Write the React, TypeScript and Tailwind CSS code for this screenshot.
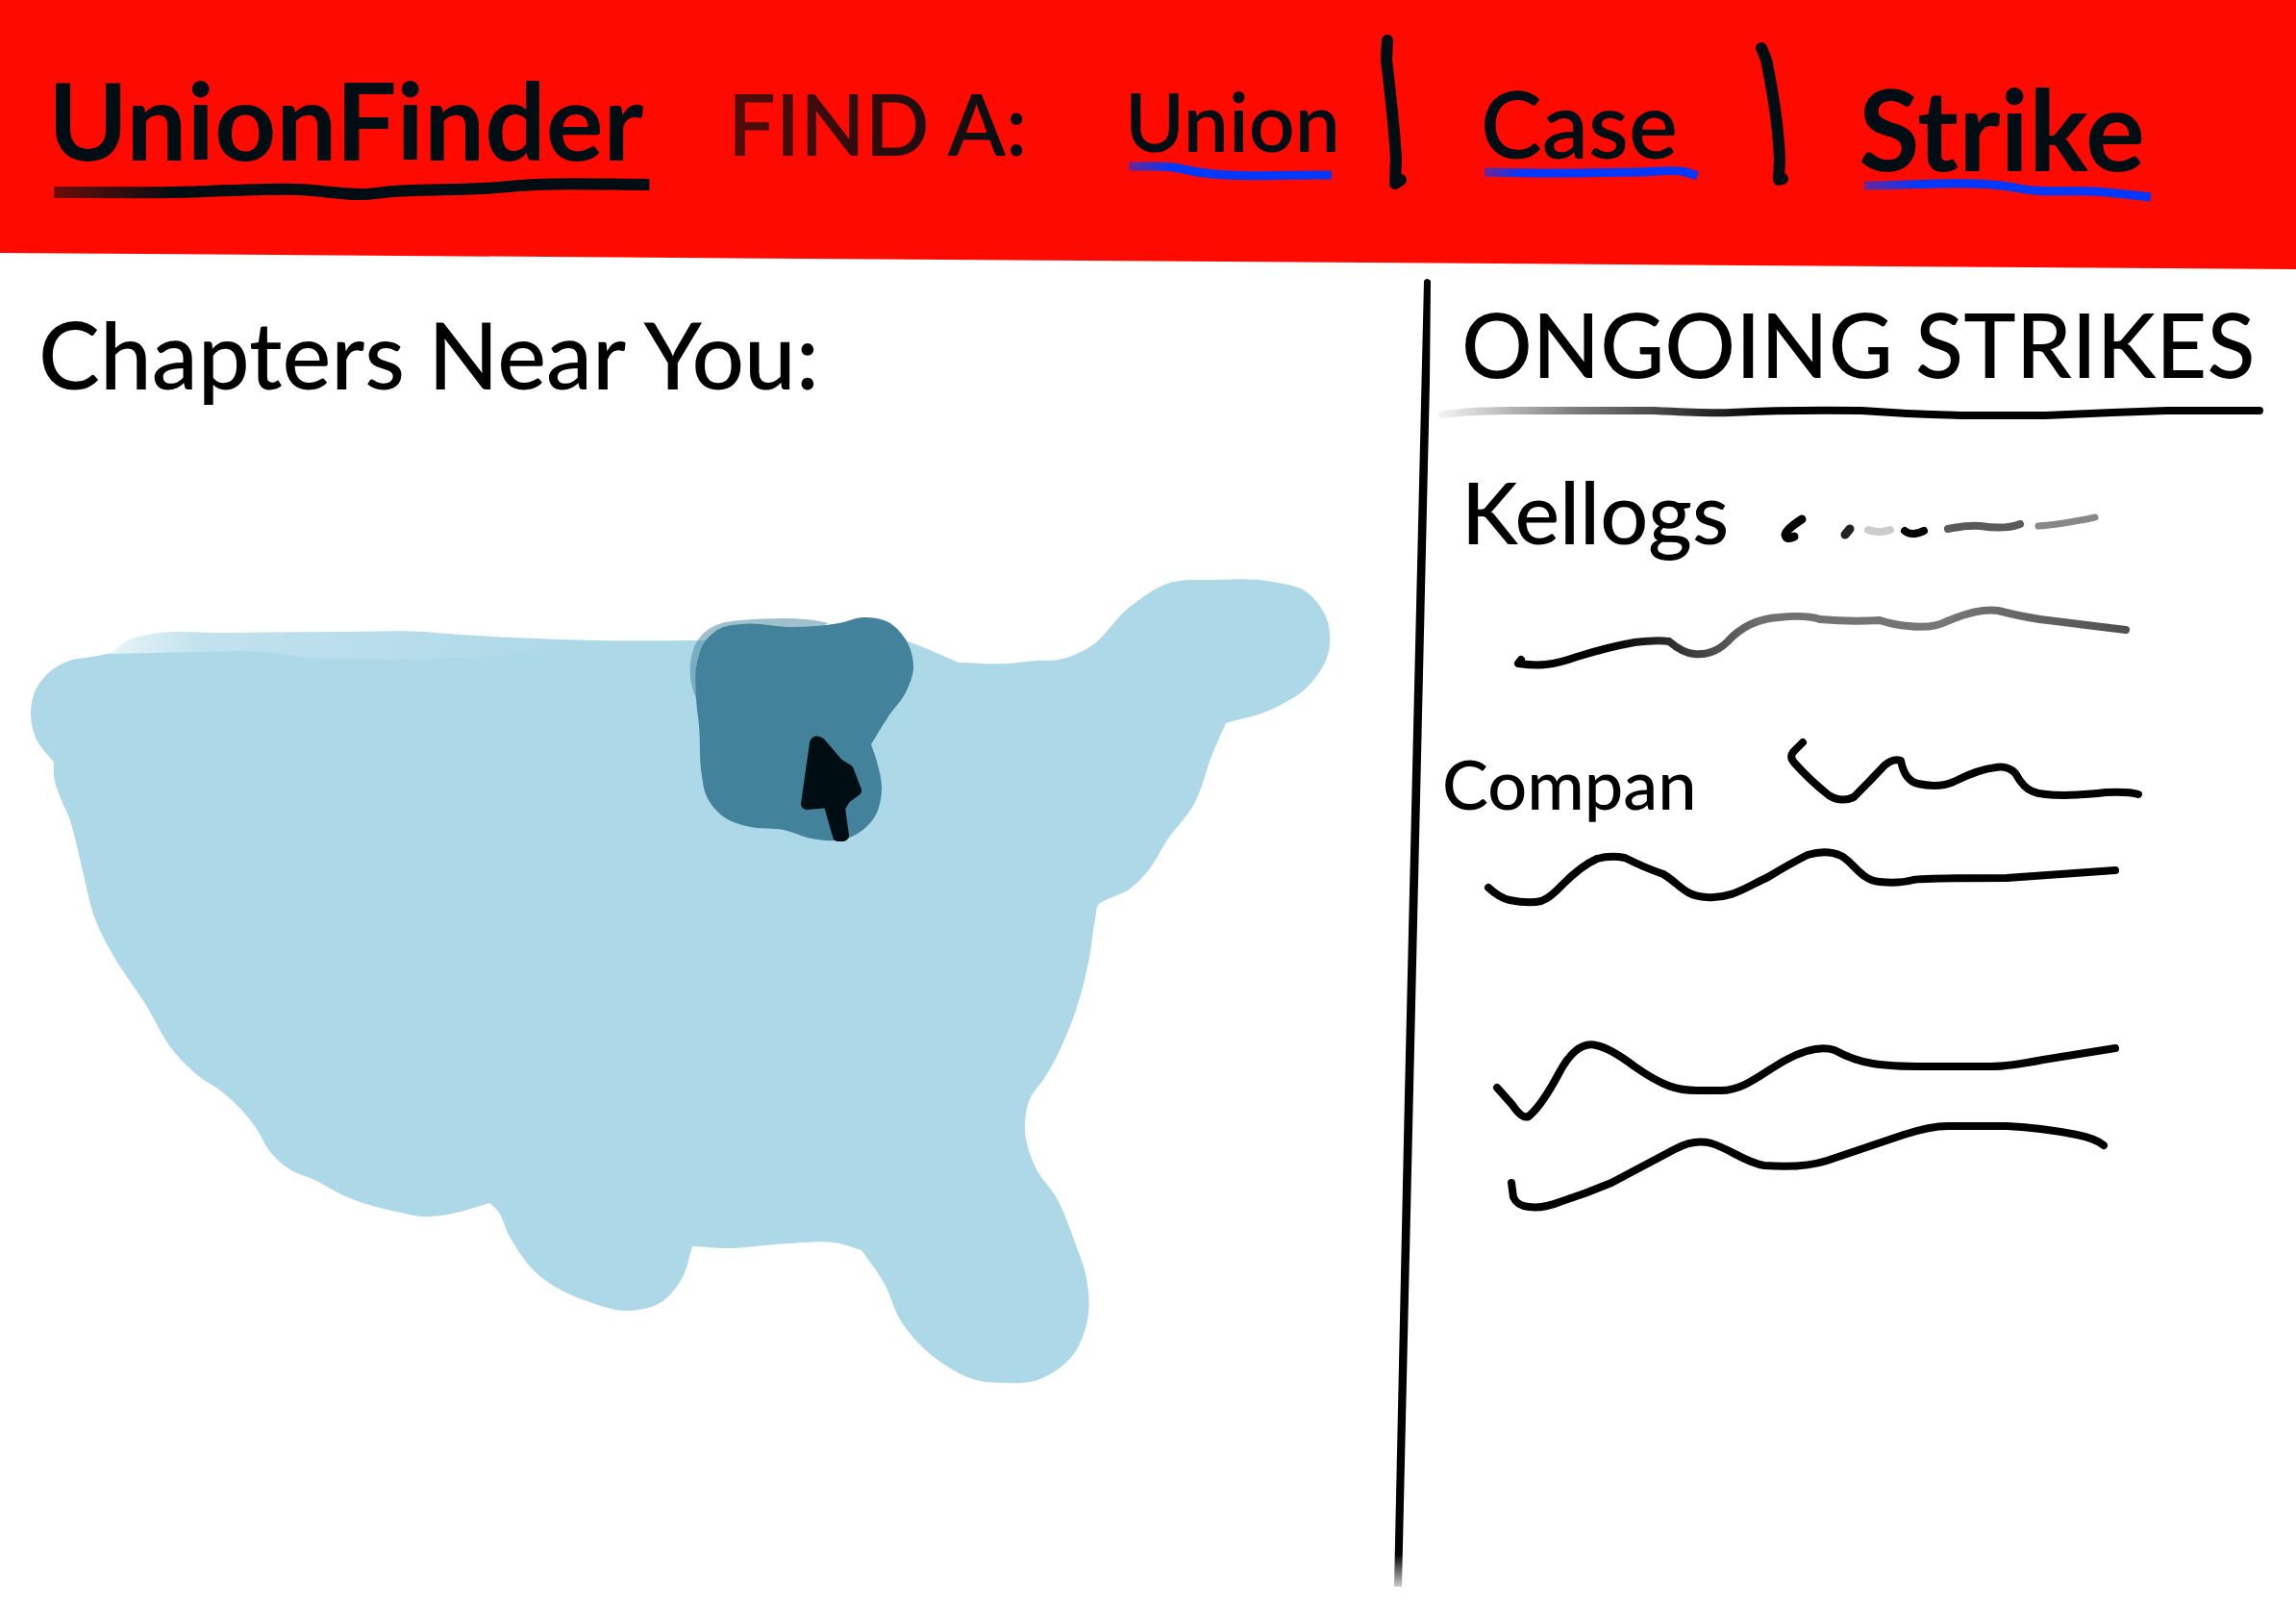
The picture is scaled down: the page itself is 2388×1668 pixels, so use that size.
import React from "react";

type Point = [number, number];

/**
 * Builds a smooth path through the points; tangents are weighted by chord length.
 * A point given twice in a row makes a sharp corner.
 */
function smooth(points: Point[], closed = false): string {
  const n = points.length;
  const at = (i: number): Point =>
    closed ? points[(i + n) % n] : points[Math.max(0, Math.min(n - 1, i))];
  const dist = (a: Point, b: Point) => Math.hypot(b[0] - a[0], b[1] - a[1]);
  const tangent = (i: number): Point => {
    const [a, b, c] = [at(i - 1), at(i), at(i + 1)];
    const h0 = dist(a, b);
    const h1 = dist(b, c);
    if (h0 === 0) return [(c[0] - b[0]) / h1, (c[1] - b[1]) / h1];
    if (h1 === 0) return [(b[0] - a[0]) / h0, (b[1] - a[1]) / h0];
    const mix = (k: 0 | 1) => (((b[k] - a[k]) / h0) * h1 + ((c[k] - b[k]) / h1) * h0) / (h0 + h1);
    return [mix(0), mix(1)];
  };
  let d = `M${points[0][0]} ${points[0][1]}`;
  const last = closed ? n : n - 1;
  for (let i = 0; i < last; i++) {
    const p = at(i);
    const q = at(i + 1);
    const h = dist(p, q) / 3;
    if (h === 0) continue;
    const s = tangent(i);
    const t = tangent(closed ? (i + 1) % n : i + 1);
    d += `C${p[0] + s[0] * h} ${p[1] + s[1] * h} ${q[0] - t[0] * h} ${q[1] - t[1] * h} ${q[0]} ${q[1]}`;
  }
  return closed ? d + "Z" : d;
}

function Stroke({ d, color = "#000", width = 8 }: { d: string; color?: string; width?: number }) {
  return (
    <path d={d} fill="none" stroke={color} strokeWidth={width} strokeLinecap="round" strokeLinejoin="round" />
  );
}

const country: Point[] = [
  [727, 666], [616, 666], [533, 663], [465, 659], [441, 657], [364, 657], [230, 658], [160, 659], [135, 665],
  [114, 679], [95, 683], [72, 687], [50, 700], [36, 720], [32, 743], [37, 767], [56, 793], [56, 793], [56, 807],
  [63, 830], [73, 853], [79, 876], [87, 910], [99, 956], [121, 999], [150, 1042], [182, 1095], [204, 1117],
  [233, 1137], [267, 1174], [279, 1195], [303, 1217], [325, 1226], [359, 1244], [417, 1261], [439, 1265],
  [470, 1262], [509, 1251], [509, 1251], [515, 1256], [530, 1286], [557, 1323], [616, 1355], [650, 1363],
  [688, 1354], [710, 1328], [720, 1296], [720, 1296], [757, 1298], [820, 1293], [873, 1293], [896, 1300],
  [896, 1300], [920, 1335], [936, 1372], [975, 1414], [1019, 1436], [1043, 1438], [1076, 1436], [1116, 1409],
  [1132, 1366], [1129, 1325], [1118, 1292], [1099, 1246], [1077, 1214], [1066, 1174], [1071, 1143],
  [1087, 1120], [1116, 1059], [1133, 996], [1139, 956], [1143, 940], [1150, 936], [1174, 925], [1196, 903],
  [1213, 875], [1242, 836], [1261, 784], [1275, 752], [1275, 752], [1324, 737], [1363, 711], [1382, 677],
  [1380, 644], [1358, 615], [1324, 605], [1261, 603], [1217, 606], [1174, 632], [1133, 673], [1101, 686],
  [1077, 687], [1048, 690], [997, 689], [997, 689], [944, 667],
];

const region: Point[] = [
  [732, 669], [748, 654], [771, 649], [825, 652], [873, 648], [898, 642], [922, 646], [942, 665], [950, 695],
  [942, 720], [924, 745], [906, 774], [906, 774], [912, 792], [917, 820], [910, 849], [888, 869], [868, 874],
  [844, 872], [815, 863], [781, 860], [752, 849], [734, 826], [730, 807], [727, 755], [724, 726], [725, 689],
];

function CountryMap() {
  return (
    <svg viewBox="0 520 1453 960" className="block w-full" role="img" aria-label="Map of chapters">
      <defs>
        <linearGradient id="coast" gradientUnits="userSpaceOnUse" x1="110" y1="0" x2="600" y2="0">
          <stop offset="0" stopColor="#fff" stopOpacity="0.75" />
          <stop offset="0.2" stopColor="#fff" stopOpacity="0.25" />
          <stop offset="0.7" stopColor="#fff" stopOpacity="0.1" />
          <stop offset="1" stopColor="#fff" stopOpacity="0" />
        </linearGradient>
      </defs>
      <path d={smooth(country, true)} fill="#add8e8" />
      <path d="M112 680Q135 657 165 656L445 655L600 664L570 678Q420 690 320 684Q280 677 250 677Z" fill="url(#coast)" />
      <path d="M718 690Q722 646 772 645Q830 640 862 648L740 700L726 730Q716 712 718 690Z" fill="#43829b" opacity="0.5" />
      <path d={smooth(region, true)} fill="#43829b" />
      <path
        d="M848 773Q849 770 853 773L871 794L882 801L885 809L890 822L879 830L873 840L877 869L872 869L862 834L839 836Z"
        fill="#000d12"
        stroke="#000d12"
        strokeWidth={12}
        strokeLinejoin="round"
      />
    </svg>
  );
}

function Underline({ points, color, width, fade }: { points: Point[]; color: string; width: number; fade: string }) {
  const id = `fade-${fade}`;
  return (
    <svg viewBox="0 0 100 24" preserveAspectRatio="none" className="block h-6 w-full overflow-visible" aria-hidden="true">
      <defs>
        <linearGradient id={id} gradientUnits="userSpaceOnUse" x1="0" y1="0" x2="100" y2="0">
          <stop offset="0" stopColor={color} stopOpacity="0.55" />
          <stop offset="0.22" stopColor={color} />
        </linearGradient>
      </defs>
      <path
        d={smooth(points)}
        fill="none"
        stroke={`url(#${id})`}
        strokeWidth={width}
        strokeLinejoin="round"
        vectorEffect="non-scaling-stroke"
      />
    </svg>
  );
}

function Bar({ d, viewBox }: { d: string; viewBox: string }) {
  return (
    <svg viewBox={viewBox} className="block w-full overflow-visible" aria-hidden="true">
      <Stroke d={d} color="#000d12" width={12} />
    </svg>
  );
}

function Header() {
  return (
    <header className="grid min-h-[280px] grid-cols-[707fr_413fr_260fr_110fr_278fr_115fr_455fr] items-start bg-[#ff0a00] pl-[50px] text-[#000d12] [clip-path:polygon(0_0,100%_0,100%_100%,0_263px)]">
      <a href="#home" className="mt-17 w-fit">
        <h1 className="text-[112px] leading-none font-bold">UnionFinder</h1>
        <Underline
          fade="title"
          color="#000d12"
          width={12}
          points={[[1, 20], [21, 20], [42, 17], [53, 22], [58, 19], [73, 16], [82, 12], [101, 12]]}
        />
      </a>
      <span className="mt-21 w-fit bg-linear-to-r from-[#520c0b] via-[#2c0c0d] to-[#000d12] bg-clip-text text-[88px] leading-none font-semibold whitespace-nowrap text-transparent">
        FIND A:
      </span>
      <a href="#union" className="mt-21 w-fit">
        <span className="block text-[84px] leading-none font-semibold">Union</span>
        <Underline fade="union" color="#0038ff" width={9} points={[[2, 5], [22, 6], [34, 11], [96, 14]]} />
      </a>
      <Bar viewBox="1430 0 110 220" d="M1443 42L1442 62Q1450 130 1452 165L1451 191L1457 187" />
      <a href="#case" className="mt-20 w-fit">
        <span className="block text-[96px] leading-none font-semibold">Case</span>
        <Underline fade="case" color="#0038ff" width={9} points={[[2, 3], [40, 4], [80, 3], [104, 3], [110, 7]]} />
      </a>
      <Bar viewBox="1818 0 115 220" d="M1832 50L1837 62Q1849 120 1851 165L1850 187L1854 186" />
      <a href="#strike" className="mt-19 w-fit">
        <span className="block text-[116px] leading-none font-bold">Strike</span>
        <Underline fade="strike" color="#0038ff" width={9} points={[[2, 1], [50, 1], [61, 6], [82, 7], [102, 13]]} />
      </a>
    </header>
  );
}

function Strikes() {
  return (
    <aside className="flex flex-col">
      <h2 className="mt-8 pl-9 text-[92px] leading-none font-medium whitespace-nowrap">ONGOING STRIKES</h2>
      <svg viewBox="1484 408 904 32" className="mt-1 block w-full" aria-hidden="true">
        <defs>
          <linearGradient id="rule" gradientUnits="userSpaceOnUse" x1="1498" y1="0" x2="1840" y2="0">
            <stop offset="0" stopColor="#000" stopOpacity="0.05" />
            <stop offset="0.4" stopColor="#000" stopOpacity="0.5" />
            <stop offset="1" stopColor="#000" />
          </linearGradient>
        </defs>
        <Stroke
          color="url(#rule)"
          d="M1500 431Q1530 427 1570 427L1720 427Q1780 430 1800 429Q1860 426 1936 427Q1990 431 2050 432L2127 432Q2190 429 2254 427L2350 427"
        />
      </svg>
      <ul>
        <li className="mt-10">
          <div className="grid grid-cols-[366fr_538fr] items-start">
            <h3 className="pt-2 pl-9 text-[88px] leading-none font-medium">Kellogs</h3>
            <svg viewBox="1850 480 538 110" className="block w-full" aria-hidden="true">
              <Stroke width={9} d="M1874 540Q1857 551 1857 556Q1858 562 1866 558" />
              <Stroke width={9} color="#222" d="M1924 550L1919 556" />
              <Stroke color="#ccc" d="M1943 551Q1954 555 1966 551" />
              <Stroke d="M1981 552Q1988 558 2001 552" />
              <Stroke color="#5a5a5a" d="M2026 550Q2045 546 2060 547Q2085 551 2101 545" />
              <Stroke color="#888" width={7} d="M2120 547Q2140 546 2179 538" />
            </svg>
          </div>
          <svg viewBox="1484 622 904 80" className="mt-8 block w-full" aria-hidden="true">
            <defs>
              <linearGradient id="ink" gradientUnits="userSpaceOnUse" x1="1578" y1="0" x2="2211" y2="0">
                <stop offset="0.15" stopColor="#000" />
                <stop offset="0.4" stopColor="#707070" />
                <stop offset="0.7" stopColor="#777" />
                <stop offset="1" stopColor="#505050" />
              </linearGradient>
            </defs>
            <Stroke
              color="url(#ink)"
              d="M1582 686L1579 690C1600 693 1615 692 1640 683Q1672 673 1700 668Q1725 665 1736 667Q1750 679 1762 680Q1782 682 1797 667Q1818 644 1850 642Q1878 639 1893 644Q1925 647 1955 645Q1970 650 1985 651Q2010 654 2025 646Q2058 632 2078 635Q2110 643 2130 645L2178 651L2211 655"
            />
          </svg>
        </li>
        <li className="mt-14">
          <div className="grid grid-cols-[366fr_538fr] items-start">
            <h3 className="pt-5 pl-4 text-[72px] leading-none font-medium">Compan</h3>
            <svg viewBox="1850 758 538 92" className="block w-full" aria-hidden="true">
              <Stroke d="M1875 772L1865 782Q1861 787 1866 793Q1882 811 1902 827Q1915 835 1928 829Q1945 812 1960 796Q1969 788 1977 791Q1981 812 1995 815Q2017 820 2034 812Q2058 800 2076 798Q2088 796 2096 804Q2105 820 2114 823Q2124 827 2147 827Q2175 826 2190 824Q2215 823 2224 826" />
            </svg>
          </div>
          <svg viewBox="1484 870 904 80" className="mt-5 block w-full" aria-hidden="true">
            <Stroke d="M1548 923Q1560 934 1570 936Q1590 940 1603 937Q1612 934 1625 920Q1645 900 1661 893Q1675 889 1690 892Q1712 903 1730 909C1748 920 1752 932 1775 933C1800 935 1815 923 1839 912Q1862 898 1880 889Q1900 883 1915 890C1928 897 1935 915 1955 917Q1975 919 1990 915Q2000 913 2087 913L2200 905" />
          </svg>
        </li>
        <li className="mt-30">
          <svg viewBox="1484 1070 904 200" className="block w-full" aria-hidden="true">
            <Stroke d="M1557 1131L1573 1149Q1585 1167 1592 1159Q1605 1147 1622 1115Q1640 1082 1660 1087Q1675 1090 1700 1109C1730 1130 1745 1134 1765 1134L1790 1134C1815 1134 1835 1114 1858 1102Q1888 1086 1908 1092Q1928 1103 1948 1106Q1965 1109 2002 1109L2070 1109Q2090 1109 2125 1102L2200 1090" />
            <Stroke d="M1572 1230L1574 1245Q1578 1254 1590 1255Q1605 1257 1622 1250Q1650 1241 1676 1230L1742 1195Q1762 1184 1780 1189C1800 1195 1815 1209 1835 1212Q1875 1215 1900 1207L1980 1180Q2010 1170 2030 1171L2087 1171Q2125 1173 2160 1180Q2180 1184 2188 1191" />
          </svg>
        </li>
      </ul>
    </aside>
  );
}

export default function App() {
  return (
    <div className="flex min-h-screen flex-col bg-white font-['Lato',sans-serif] text-black">
      <Header />
      <main className="grid grow grid-cols-[1453fr_31fr_904fr]">
        <section className="flex flex-col gap-[104px]">
          <h2 className="mt-10 pl-10 text-[96px] leading-none font-medium">Chapters Near You:</h2>
          <CountryMap />
        </section>
        <div className="flex justify-center py-2">
          <svg viewBox="0 0 31 1360" preserveAspectRatio="none" className="block h-[1362px] w-full overflow-visible" aria-hidden="true">
            <defs>
              <linearGradient id="divider" x1="0" y1="0" x2="0" y2="1">
                <stop offset="0.975" stopColor="#000" />
                <stop offset="1" stopColor="#000" stopOpacity="0.2" />
              </linearGradient>
            </defs>
            <path d="M28 4Q31 0 35 4L34 110L5 1360L-3 1360L8 850Z" fill="url(#divider)" />
          </svg>
        </div>
        <Strikes />
      </main>
    </div>
  );
}
